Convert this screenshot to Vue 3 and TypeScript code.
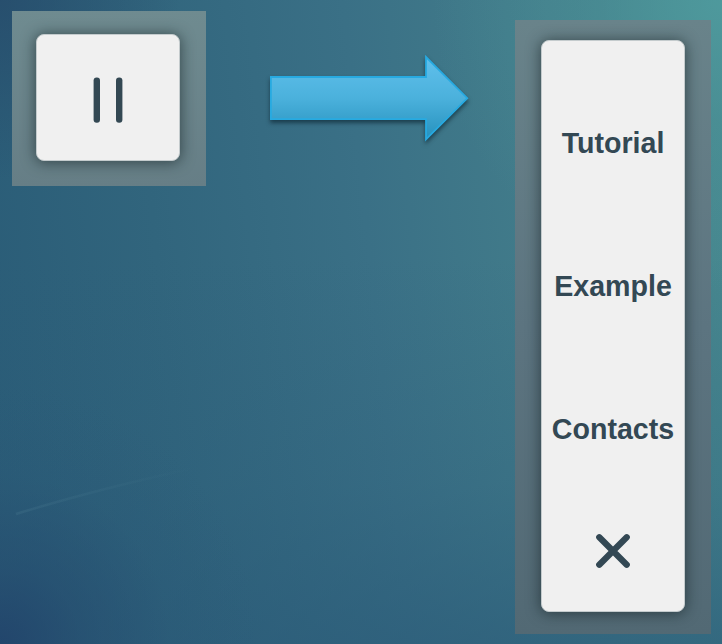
<script setup lang="ts">
const items: string[] = ['Tutorial', 'Example', 'Contacts']
</script>

<template>
  <main class="stage">
    <svg class="streak" width="200" height="60" viewBox="0 0 200 60" aria-hidden="true">
      <defs>
        <linearGradient id="streakFade" x1="0" y1="0" x2="1" y2="0">
          <stop offset="0" stop-color="#6fa0ae" stop-opacity="0.13" />
          <stop offset="1" stop-color="#6fa0ae" stop-opacity="0" />
        </linearGradient>
      </defs>
      <path d="M2 54Q80 30 180 8" fill="none" stroke="url(#streakFade)" stroke-width="2.5" />
    </svg>

    <section class="frame closed">
      <button class="card toggle" type="button" aria-label="Open menu">
        <svg width="30" height="46" viewBox="0 0 30 46">
          <rect x="0.6" y="0.5" width="6.4" height="45.2" rx="3" />
          <rect x="23" y="0.5" width="6.4" height="45.2" rx="3" />
        </svg>
      </button>
    </section>

    <svg class="arrow" width="200" height="88" viewBox="0 0 200 88" aria-hidden="true">
      <defs>
        <linearGradient id="arrowFill" x1="0" y1="0" x2="0" y2="1">
          <stop offset="0" stop-color="#60c0ec" />
          <stop offset="0.5" stop-color="#4bb1dc" />
          <stop offset="1" stop-color="#2691bd" />
        </linearGradient>
      </defs>
      <path
        d="M0.9 23H156V3L197.3 44.2L156 85.3V65.2H0.9Z"
        fill="url(#arrowFill)"
        stroke="#27aae1"
        stroke-width="1.8"
      />
    </svg>

    <section class="frame opened">
      <nav class="card menu">
        <a v-for="item in items" :key="item" class="item">{{ item }}</a>
        <button class="close" type="button" aria-label="Close menu">
          <svg width="36" height="36" viewBox="0 0 36 36">
            <path d="M4.3 4.3L31.7 31.7M31.7 4.3L4.3 31.7" />
          </svg>
        </button>
      </nav>
    </section>
  </main>
</template>

<style>
body {
  margin: 0;
  overflow: hidden;
}
</style>

<style scoped>
.stage {
  position: relative;
  box-sizing: border-box;
  width: 722px;
  height: 644px;
  padding-left: 12px;
  display: flex;
  align-items: flex-start;
  background:
    radial-gradient(circle at 0 100%, rgba(33, 66, 106, 0.85) 0, rgba(35, 72, 108, 0.5) 80px, rgba(38, 80, 112, 0.15) 170px, rgba(38, 80, 112, 0) 260px),
    radial-gradient(circle at 0 0, rgba(37, 72, 105, 0.7) 0, rgba(37, 72, 105, 0) 180px),
    radial-gradient(circle at 100% 0, rgba(79, 155, 158, 0.9) 0, rgba(79, 155, 158, 0.35) 120px, rgba(79, 155, 158, 0) 290px),
    linear-gradient(to bottom, rgba(42, 90, 120, 0) 40%, rgba(42, 90, 120, 0.25) 75%, rgba(42, 90, 120, 0.65) 100%),
    linear-gradient(84deg, #2a5c77 0, #31657d 25%, #3a7086 52%, #437e8b 78%, #47888f 100%);
  font-family: "Liberation Sans", Arial, sans-serif;
}

.streak {
  position: absolute;
  left: 14px;
  top: 460px;
}

.frame {
  box-sizing: border-box;
  flex: none;
  display: flex;
}

.closed {
  width: 194px;
  height: 175px;
  margin-top: 11px;
  padding: 23px 26px 25px 24px;
  background: linear-gradient(to bottom, #6f8b90, #667e86);
}

.arrow {
  flex: none;
  margin: 54px 0 0 64px;
  filter: drop-shadow(0 3px 2px rgba(10, 35, 48, 0.65));
}

.opened {
  width: 196px;
  height: 614px;
  margin: 20px 0 0 45px;
  padding: 20px 26px 22px;
  background: linear-gradient(to bottom, #69838a, #5c7480 50%, #526974);
}

.card {
  box-sizing: border-box;
  flex: 1;
  border: 1px solid #c4cbcd;
  border-radius: 8px;
  background: #f0f0f0;
  box-shadow: 0 1px 14px 1px rgba(20, 35, 38, 0.6);
}

.toggle {
  display: flex;
  justify-content: center;
  align-items: center;
  padding: 5px 0 0;
  fill: #334853;
}

.menu {
  display: flex;
  flex-direction: column;
  padding-top: 31px;
}

.item {
  height: 143px;
  display: flex;
  justify-content: center;
  align-items: center;
  color: #334854;
  font-size: 28.6px;
  font-weight: 700;
  line-height: 1;
}

.close {
  display: flex;
  justify-content: center;
  align-items: center;
  height: 100px;
  padding: 0;
  border: 0;
  background: none;
}

.close path {
  fill: none;
  stroke: #334854;
  stroke-width: 6.3;
  stroke-linecap: round;
}
</style>
